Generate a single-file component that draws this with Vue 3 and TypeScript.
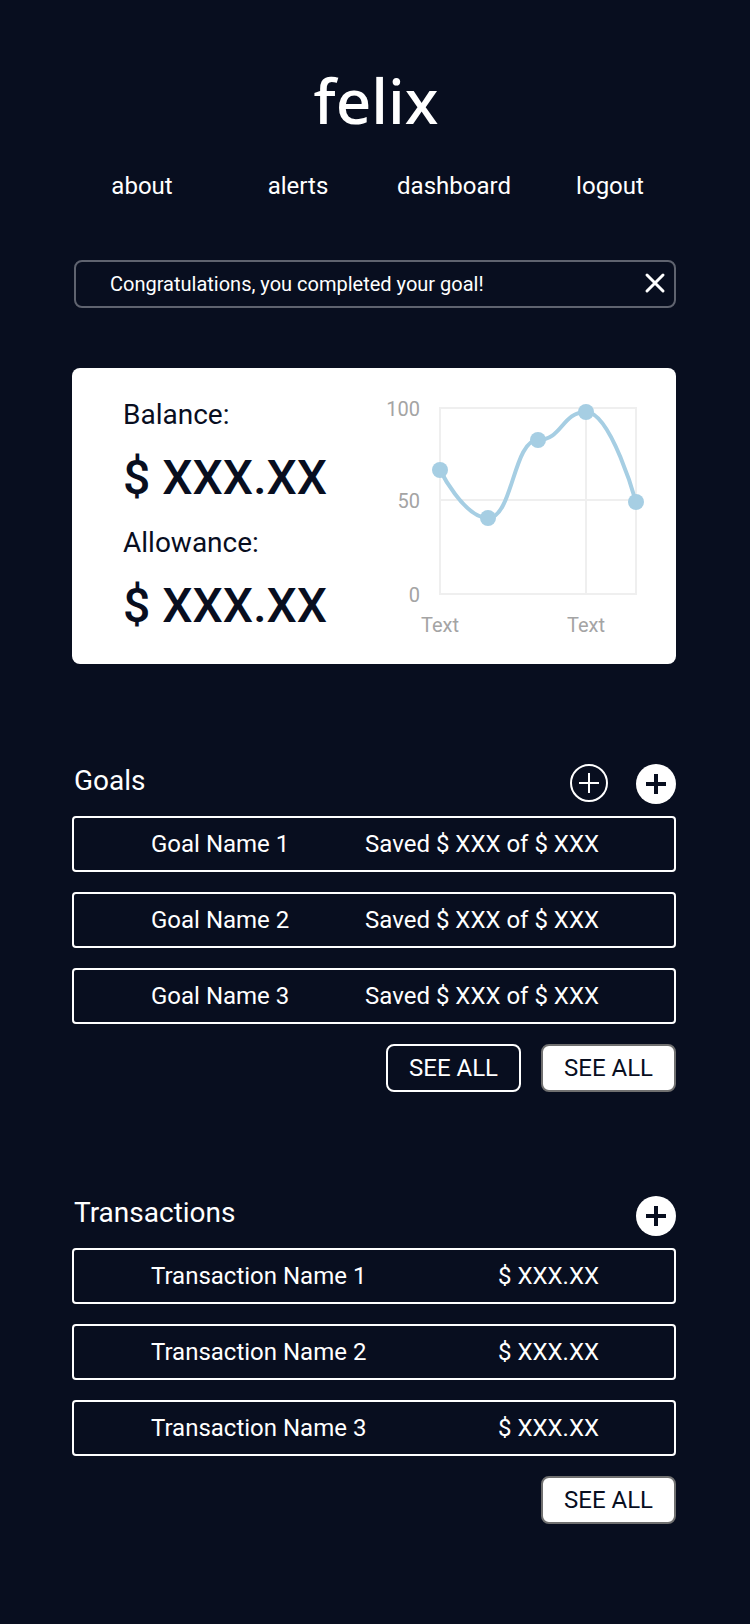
<script setup lang="ts">
import { ref } from 'vue'

interface Entry {
  id: number
  name: string
  value: string
}

interface Point {
  x: number
  y: number
}

const links: string[] = ['about', 'alerts', 'dashboard', 'logout']

const totals: { label: string; amount: string }[] = [
  { label: 'Balance:', amount: '$ XXX.XX' },
  { label: 'Allowance:', amount: '$ XXX.XX' },
]

const goals: Entry[] = [1, 2, 3].map((id) => ({
  id,
  name: `Goal Name ${id}`,
  value: 'Saved $ XXX of $ XXX',
}))

const transactions: Entry[] = [1, 2, 3].map((id) => ({
  id,
  name: `Transaction Name ${id}`,
  value: '$ XXX.XX',
}))

const points: Point[] = [
  { x: 66, y: 102 },
  { x: 114, y: 150 },
  { x: 164, y: 72 },
  { x: 212, y: 44 },
  { x: 262, y: 134 },
]

const alertOpen = ref(true)
</script>

<template>
  <div class="page">
    <header class="header">
      <div class="logo">felix</div>
      <nav class="nav">
        <a v-for="link in links" :key="link" :href="`#${link}`">{{ link }}</a>
      </nav>
    </header>

    <main class="content">
      <div v-if="alertOpen" class="alert" role="status">
        <span>Congratulations, you completed your goal!</span>
        <button type="button" class="close" aria-label="Dismiss" @click="alertOpen = false">
          <svg width="24" height="24" viewBox="0 0 24 24" aria-hidden="true">
            <path d="M4 3L20 19M20 3L4 19" stroke="currentColor" stroke-width="3" stroke-linecap="round" />
          </svg>
        </button>
      </div>

      <section class="card">
        <div class="totals">
          <template v-for="total in totals" :key="total.label">
            <p class="label">{{ total.label }}</p>
            <p class="amount">{{ total.amount }}</p>
          </template>
        </div>
        <svg class="chart" width="302" height="296" viewBox="0 0 302 296" role="img">
          <path class="grid" d="M66 40H262V226H66ZM66 132H262M212 40V226" />
          <path
            class="line"
            d="M66 102C66 102 90 150 114 150C139 150 139 72 164 72C188 72 188 44 212 44C237 44 262 134 262 134"
          />
          <circle v-for="p in points" :key="p.x" class="dot" :cx="p.x" :cy="p.y" r="8" />
          <g text-anchor="end">
            <text x="46" y="48">100</text>
            <text x="46" y="140">50</text>
            <text x="46" y="234">0</text>
          </g>
          <g text-anchor="middle">
            <text x="66" y="264">Text</text>
            <text x="212" y="264">Text</text>
          </g>
        </svg>
      </section>

      <section class="block">
        <div class="block-head">
          <h2>Goals</h2>
          <div class="adds">
            <button type="button" class="round" aria-label="Edit goals">
              <svg width="38" height="38" viewBox="0 0 38 38" fill="none" aria-hidden="true">
                <circle cx="19" cy="19" r="18" stroke="#fff" stroke-width="2" />
                <path d="M9 19H29M19 9V29" stroke="#fff" stroke-width="2" />
              </svg>
            </button>
            <button type="button" class="round" aria-label="Add goal">
              <svg width="40" height="40" viewBox="0 0 40 40" aria-hidden="true">
                <circle cx="20" cy="20" r="20" fill="#fff" />
                <path d="M10 20H30M20 10V30" stroke="#080e1f" stroke-width="4" />
              </svg>
            </button>
          </div>
        </div>
        <ul class="rows">
          <li v-for="goal in goals" :key="goal.id">
            <span>{{ goal.name }}</span>
            <span>{{ goal.value }}</span>
          </li>
        </ul>
        <div class="actions">
          <button type="button" class="btn">SEE ALL</button>
          <button type="button" class="btn solid">SEE ALL</button>
        </div>
      </section>

      <section class="block">
        <div class="block-head">
          <h2>Transactions</h2>
          <div class="adds">
            <button type="button" class="round" aria-label="Add transaction">
              <svg width="40" height="40" viewBox="0 0 40 40" aria-hidden="true">
                <circle cx="20" cy="20" r="20" fill="#fff" />
                <path d="M10 20H30M20 10V30" stroke="#080e1f" stroke-width="4" />
              </svg>
            </button>
          </div>
        </div>
        <ul class="rows">
          <li v-for="item in transactions" :key="item.id">
            <span>{{ item.name }}</span>
            <span>{{ item.value }}</span>
          </li>
        </ul>
        <div class="actions">
          <button type="button" class="btn solid">SEE ALL</button>
        </div>
      </section>
    </main>
  </div>
</template>

<style>
body {
  margin: 0;
  background: #080e1f;
}
</style>

<style scoped>
.page {
  box-sizing: border-box;
  min-height: 100vh;
  padding: 68px 0 100px;
  background: #080e1f;
  color: #fff;
  font-family: Roboto, 'Liberation Sans', sans-serif;
  font-size: 24px;
  line-height: 28px;
}

.header {
  display: flex;
  flex-direction: column;
  gap: 40px;
  padding: 0 62px 0 64px;
}

.logo {
  font-family: 'Noto Sans', sans-serif;
  font-size: 62px;
  font-weight: 500;
  line-height: 64px;
  text-align: center;
}

.nav {
  display: grid;
  grid-template-columns: repeat(4, 1fr);
  text-align: center;
}

.nav a {
  color: inherit;
  text-decoration: none;
}

.content {
  padding: 60px 74px 0 72px;
}

.alert {
  display: flex;
  align-items: center;
  justify-content: space-between;
  margin-left: 2px;
  margin-bottom: 60px;
  padding: 10px 7px 10px 34px;
  border: 2px solid #5f636f;
  border-radius: 8px;
  font-size: 20px;
  line-height: 24px;
}

button {
  padding: 0;
  border: 0;
  background: none;
  color: inherit;
  font: inherit;
  cursor: pointer;
}

svg {
  display: block;
}

.card {
  display: flex;
  justify-content: space-between;
  border-radius: 8px;
  background: #fff;
  color: #080e1f;
}

.totals {
  padding: 30px 0 10px 51px;
}

.label {
  margin: 0 0 18px;
  font-size: 28px;
  line-height: 34px;
}

.amount {
  margin: 0 0 20px;
  font-size: 48px;
  font-weight: 500;
  line-height: 56px;
}

.chart {
  flex: none;
}

.grid {
  fill: none;
  stroke: #efefef;
  stroke-width: 2;
}

.line {
  fill: none;
  stroke: #a6cee3;
  stroke-width: 4;
}

.dot {
  fill: #a6cee3;
}

.chart text {
  fill: #a4a4a4;
  font-size: 20px;
}

.block {
  margin-top: 100px;
}

.block + .block {
  margin-top: 104px;
}

.block-head {
  display: flex;
  align-items: flex-start;
  justify-content: space-between;
  padding-left: 2px;
}

.block-head h2 {
  margin: 0;
  font-size: 28px;
  font-weight: 400;
  line-height: 34px;
}

.adds {
  display: flex;
  align-items: flex-start;
  gap: 28px;
}

.rows {
  display: flex;
  flex-direction: column;
  gap: 20px;
  margin: 12px 0 20px;
  padding: 0;
  list-style: none;
}

.rows li {
  display: flex;
  justify-content: space-between;
  padding: 12px 75px 12px 77px;
  border: 2px solid #fff;
  border-radius: 4px;
}

.actions {
  display: flex;
  justify-content: flex-end;
  gap: 20px;
}

.btn {
  padding: 8px 21px;
  border: 2px solid #fff;
  border-radius: 8px;
}

.solid {
  border-color: #707070;
  background: #fff;
  color: #080e1f;
}
</style>
